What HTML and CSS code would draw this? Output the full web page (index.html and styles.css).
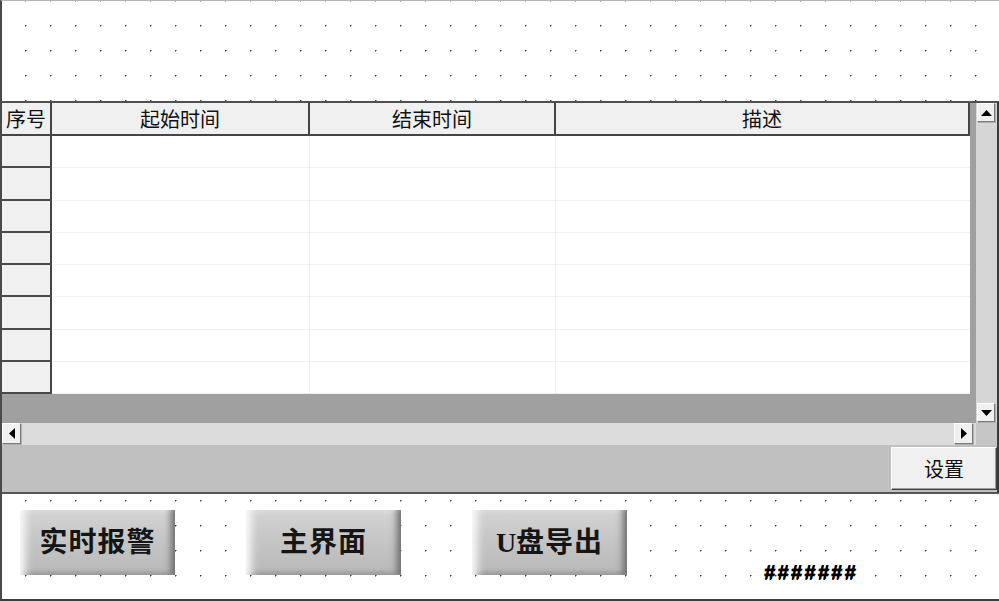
FILE: index.html
```html
<!DOCTYPE html>
<html lang="zh">
<head>
<meta charset="utf-8">
<title>报警记录</title>
<link rel="stylesheet" href="styles.css">
</head>
<body>
<div class="frame">
  <div class="top-space"></div>
  <div class="widget">
    <div class="grid-area">
      <div class="viewport">
        <div class="table">
          <div class="hcell">序号</div>
          <div class="hcell">起始时间</div>
          <div class="hcell">结束时间</div>
          <div class="hcell">描述</div>

          <div class="rcell"></div><div class="dcell"></div><div class="dcell"></div><div class="dcell last"></div>
          <div class="rcell"></div><div class="dcell"></div><div class="dcell"></div><div class="dcell last"></div>
          <div class="rcell"></div><div class="dcell"></div><div class="dcell"></div><div class="dcell last"></div>
          <div class="rcell"></div><div class="dcell"></div><div class="dcell"></div><div class="dcell last"></div>
          <div class="rcell"></div><div class="dcell"></div><div class="dcell"></div><div class="dcell last"></div>
          <div class="rcell"></div><div class="dcell"></div><div class="dcell"></div><div class="dcell last"></div>
          <div class="rcell"></div><div class="dcell"></div><div class="dcell"></div><div class="dcell last"></div>
          <div class="rcell"></div><div class="dcell"></div><div class="dcell"></div><div class="dcell last"></div>
        </div>
      </div>
      <div class="vscroll">
        <div class="sbtn"><svg width="11" height="6" viewBox="0 0 11 6"><polygon points="0,6 5.5,0 11,6" fill="#000"/></svg></div>
        <div class="sbtn"><svg width="11" height="6" viewBox="0 0 11 6"><polygon points="0,0 5.5,6 11,0" fill="#000"/></svg></div>
      </div>
      <div class="hscroll">
        <div class="sbtn hbtn"><svg width="6" height="11" viewBox="0 0 6 11"><polygon points="6,0 0,5.5 6,11" fill="#000"/></svg></div>
        <div class="sbtn hbtn"><svg width="6" height="11" viewBox="0 0 6 11"><polygon points="0,0 6,5.5 0,11" fill="#000"/></svg></div>
      </div>
      <div class="corner"></div>
    </div>
    <div class="footer">
      <div class="set-btn">设置</div>
    </div>
  </div>
  <div class="bottom">
    <div class="big-btn">实时报警</div>
    <div class="big-btn">主界面</div>
    <div class="big-btn"><span class="latin">U</span>盘导出</div>
    <div class="status">#######</div>
  </div>
</div>
</body>
</html>
```

FILE: styles.css
```css
html, body {
  margin: 0;
  padding: 0;
  background: #fff;
  overflow: hidden;
}

.frame {
  width: 999px;
  height: 601px;
  box-sizing: border-box;
  border-left: 2px solid #4a4a4a;
  border-top: 1px solid #b4b4b4;
  border-bottom: 2px solid #3c3c3c;
  background-color: #fff;
  background-image: radial-gradient(circle at 0.5px 0.5px, #3c3c3c 0.9px, transparent 1.1px);
  background-size: 25px 25px;
  background-origin: border-box;
  background-position: 0 0;
  display: flex;
  flex-direction: column;
  font-family: "Noto Sans CJK SC", "Noto Sans", sans-serif;
}

.top-space {
  height: 100px;
  flex: none;
}

.widget {
  flex: none;
  height: 393px;
  box-sizing: border-box;
  border-top: 2px solid #505050;
  border-right: 2px solid #3a3a3a;
  border-bottom: 2px solid #555;
  background: #c0c0c0;
  display: flex;
  flex-direction: column;
}

.grid-area {
  display: grid;
  grid-template-columns: 974px 21px;
  grid-template-rows: 320px 22px;
}

.viewport {
  background: #a0a0a0;
  overflow: hidden;
}

.table {
  width: 968px;
  height: 291px;
  display: grid;
  grid-template-columns: 50px 258px 246px 414px;
  grid-template-rows: 33px repeat(8, 1fr);
}

.hcell {
  box-sizing: border-box;
  background: #f0f0f0;
  border-right: 2px solid #454545;
  border-bottom: 2px solid #454545;
  font-size: 20px;
  line-height: 31px;
  text-align: center;
  color: #111;
}

.rcell {
  box-sizing: border-box;
  background: #f0f0f0;
  border-right: 2px solid #454545;
  border-bottom: 2px solid #4a4a4a;
}

.dcell {
  box-sizing: border-box;
  background: #fff;
  border-right: 1px solid #eeeeee;
  border-bottom: 1px solid #f0f0f0;
}

.dcell.last {
  border-right: none;
}

.vscroll {
  background: #d6d6d6;
  display: flex;
  flex-direction: column;
  justify-content: space-between;
  padding: 0 2px 1px 1px;
}

.sbtn {
  box-sizing: border-box;
  width: 18px;
  height: 19px;
  background: #f0f0f0;
  border: 1px solid;
  border-color: #ffffff #7a7a7a #7a7a7a #ffffff;
  box-shadow: 1px 1px 0 #b0b0b0;
  display: flex;
  align-items: center;
  justify-content: center;
}

.hscroll {
  background: #dcdcdc;
  display: flex;
  justify-content: space-between;
  align-items: flex-start;
  padding-right: 3px;
}

.hbtn {
  width: 19px;
  height: 21px;
}

.corner {
  background: #c6c6c6;
}

.footer {
  flex: 1;
  display: flex;
  justify-content: flex-end;
  align-items: flex-start;
  padding: 2px 0 0 0;
}

.set-btn {
  box-sizing: border-box;
  width: 106px;
  height: 43px;
  background: #f0f0f0;
  border: 1px solid;
  border-color: #ffffff #404040 #404040 #ffffff;
  box-shadow: inset -1px -1px 0 #a0a0a0;
  font-size: 20px;
  line-height: 41px;
  text-align: center;
  color: #111;
}

.bottom {
  flex: 1;
  display: flex;
  align-items: flex-start;
  padding: 16px 0 0 18px;
  gap: 71px;
}

.big-btn {
  flex: none;
  width: 155px;
  height: 65px;
  box-sizing: border-box;
  background: linear-gradient(to bottom, #d4d4d4 0%, #c6c6c6 45%, #b8b8b8 100%);
  box-shadow:
    inset 10px 0 9px -5px #fcfcfc,
    inset -9px 0 7px -5px #6c6c6c,
    inset 0 -6px 5px -4px #8a8a8a,
    inset 0 5px 5px -4px #e6e6e6;
  font-family: "Liberation Serif", "Noto Sans CJK SC", serif;
  font-weight: 700;
  font-size: 28px;
  letter-spacing: 1px;
  line-height: 65px;
  text-align: center;
  color: #151515;
}

.latin {
  font-family: "Liberation Serif", serif;
  letter-spacing: 0;
}

.status {
  margin-top: 52px;
  margin-left: 66px;
  font-family: "Liberation Sans", Arial, sans-serif;
  font-weight: 700;
  font-size: 20px;
  line-height: 20px;
  letter-spacing: 2.3px;
  color: #000;
  text-shadow: 0.7px 0 0 #000, 0 0.5px 0 #000;
}
```
